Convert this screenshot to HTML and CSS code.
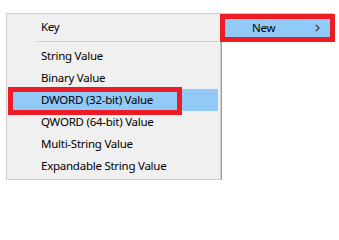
FILE: index.html
```html
<!DOCTYPE html>
<html>
<head>
<meta charset="utf-8">
<link rel="stylesheet" href="styles.css">
</head>
<body>
<div class="stage">
  <div class="submenu">
    <div class="item">Key</div>
    <div class="sep"></div>
    <div class="item">String Value</div>
    <div class="item">Binary Value</div>
    <div class="item hl">DWORD (32-bit) Value<span class="annot dword"></span></div>
    <div class="item">QWORD (64-bit) Value</div>
    <div class="item">Multi-String Value</div>
    <div class="item">Expandable String Value</div>
  </div>
  <div class="parent">
    <div class="new">
      <span class="new-label">New</span>
      <svg class="chev" width="5" height="8" viewBox="0 0 5 8"><polyline points="0.8,0.8 4,4 0.8,7.2" fill="none" stroke="#333" stroke-width="1.2"/></svg>
      <span class="annot full"></span>
    </div>
  </div>
</div>
</body>
</html>
```
FILE: styles.css
```css
html, body {
  margin: 0;
  padding: 0;
  background: #ffffff;
}
body {
  font-family: "Noto Sans", "Open Sans", sans-serif;
  font-size: 11.5px;
  letter-spacing: -0.25px;
  color: #000;
}
.stage {
  display: flex;
  align-items: flex-start;
  padding: 13px 0 0 6px;
}
.submenu {
  box-sizing: border-box;
  width: 215px;
  background: #f0f0f0;
  border: 1px solid #cccccc;
  box-shadow: 1px 0 0 #a0a0a0;
  padding: 2px 0;
}
.item {
  position: relative;
  height: 22px;
  line-height: 22px;
  margin: 0 2px 0 1px;
  padding-left: 33px;
  white-space: nowrap;
}
.item.hl {
  background: #91c9f7;
}
.sep {
  height: 1px;
  background: #cccccc;
  margin: 3px 2px 3px 30px;
}
.annot {
  position: absolute;
  box-sizing: border-box;
  border: 5px solid #ed1c24;
}
.annot.dword {
  left: 0px;
  top: -2px;
  width: 174px;
  height: 28px;
}
.parent {
  margin-left: -1px;
  width: 113px;
  border-top: 1px solid #cccccc;
}
.new {
  position: relative;
  display: flex;
  align-items: center;
  box-sizing: border-box;
  width: 115px;
  height: 28px;
  background: #91c9f7;
  padding-left: 32px;
}
.new-label {
  line-height: 28px;
}
.chev {
  margin-left: auto;
  margin-right: 15px;
}
.annot.full {
  left: 0;
  top: 0;
  right: 0;
  bottom: 0;
}
```
